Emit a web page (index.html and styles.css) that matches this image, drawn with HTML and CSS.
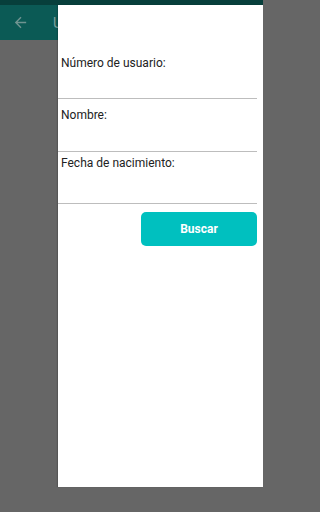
FILE: index.html
```html
<!DOCTYPE html>
<html lang="es">
<head>
<meta charset="utf-8">
<link rel="stylesheet" href="styles.css">
</head>
<body>
<div class="screen">
  <div class="statusbar"></div>
  <div class="appbar">
    <svg class="back" viewBox="0 0 24 24" width="17" height="17"><path d="M20 11H7.83l5.59-5.59L12 4l-8 8 8 8 1.41-1.41L7.83 13H20v-2z" fill="currentColor"/></svg>
    <span class="title">Usuarios</span>
  </div>
  <div class="content"></div>
  <div class="panel">
    <div class="field f1">
      <label class="label">Número de usuario:</label>
      <div class="input i1"></div>
    </div>
    <div class="field f2">
      <label class="label">Nombre:</label>
      <div class="input i2"></div>
    </div>
    <div class="field f3">
      <label class="label">Fecha de nacimiento:</label>
      <div class="input i3"></div>
    </div>
    <div class="actions">
      <button class="btn">Buscar</button>
    </div>
  </div>
</div>
</body>
</html>
```
FILE: styles.css
```css
* { box-sizing: border-box; }
html, body { margin: 0; padding: 0; }
body {
  width: 263px;
  height: 512px;
  overflow: hidden;
  font-family: Roboto, "Liberation Sans", sans-serif;
  background: #666666;
}
.screen {
  position: relative;
  width: 263px;
  height: 512px;
  display: flex;
  flex-direction: column;
}
.statusbar {
  height: 5px;
  background: #073f3b;
}
.appbar {
  height: 35px;
  background: #0b5a55;
  display: flex;
  align-items: center;
  padding-left: 12px;
  color: #6f9491;
}
.back {
  display: block;
  margin-top: 0px;
}
.title {
  margin-left: 24px;
  font-size: 14px;
  color: #7d9f9c;
}
.content {
  flex: 1;
  background: #666666;
}
.panel {
  position: absolute;
  left: 58px;
  top: 5px;
  width: 205px;
  height: 482px;
  background: #ffffff;
  padding: 51px 6px 0 0;
  box-shadow: -1px 0 1px rgba(0,0,0,0.15);
}
.field {
  display: flex;
  flex-direction: column;
}
.label {
  display: block;
  font-size: 12px;
  line-height: 14px;
  color: #222222;
  padding-left: 3px;
}
.input {
  border-bottom: 1px solid #bdbdbd;
}
.i1 { height: 29px; }
.f2 { margin-top: 9px; }
.i2 { height: 30px; }
.f3 { margin-top: 4px; }
.i3 { height: 34px; }
.actions {
  display: flex;
  justify-content: flex-end;
  margin-top: 8px;
}
.btn {
  width: 116px;
  height: 34px;
  border: none;
  border-radius: 5px;
  background: #00c0bf;
  color: #ffffff;
  font-family: Roboto, "Liberation Sans", sans-serif;
  font-weight: 700;
  font-size: 12px;
  padding: 0;
}
```
